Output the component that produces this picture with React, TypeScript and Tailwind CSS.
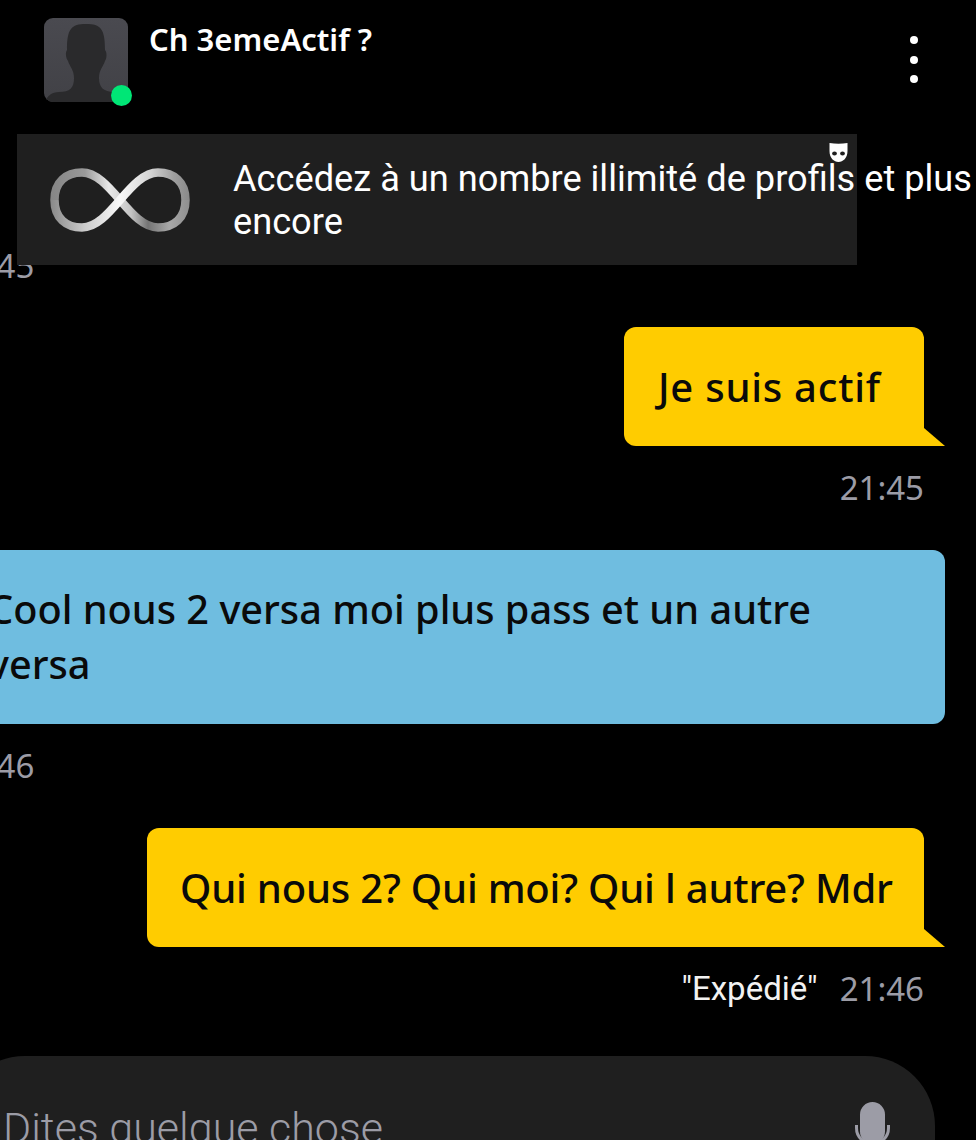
const plex = "font-['Noto_Sans',sans-serif]";
const roboto = "font-['Roboto',sans-serif]";

function Tail({ fill }: { fill: string }) {
  return (
    <svg className="absolute bottom-0 left-full" width="21" height="18" viewBox="0 0 21 18">
      <path d="M0 0 L21 18 L0 18 Z" fill={fill} />
    </svg>
  );
}

function Avatar() {
  return (
    <div className="relative h-[84px] w-[84px] shrink-0">
      <svg className="rounded-[9px]" width="84" height="84" viewBox="0 0 84 84">
        <defs>
          <linearGradient id="av" x1="0" y1="0" x2="0" y2="1">
            <stop offset="0" stopColor="#4a4a50" />
            <stop offset="1" stopColor="#414146" />
          </linearGradient>
        </defs>
        <rect width="84" height="84" fill="url(#av)" />
        <path
          d="M23 32 C23 11 27 6 42 6 C57 6 61 11 61 32 C63 34 63 40 61 43 C59 49 55 52 55 60 C55 70 60 73 68 74 L84 75 L84 84 L1 84 C3 78 8 74 15 74 C26 74 30 70 30 60 C30 52 26 49 24 43 C22 40 21 35 23 32 Z"
          fill="#2a2a2c"
        />
      </svg>
      <span className="absolute left-[67px] top-[67px] h-[21px] w-[21px] rounded-full bg-[#00e676]" />
    </div>
  );
}

function Infinity8() {
  return (
    <svg width="140" height="64" viewBox="0 0 140 64" className="shrink-0">
      <defs>
        <linearGradient id="infa" gradientUnits="userSpaceOnUse" x1="0" y1="0" x2="140" y2="0">
          <stop offset="0" stopColor="#858585" />
          <stop offset="0.25" stopColor="#9a9a9a" />
          <stop offset="0.42" stopColor="#e8e8e8" />
          <stop offset="0.58" stopColor="#c4c4c4" />
          <stop offset="0.7" stopColor="#747474" />
          <stop offset="0.85" stopColor="#a8a8a8" />
          <stop offset="1" stopColor="#8e8e8e" />
        </linearGradient>
        <linearGradient id="infb" gradientUnits="userSpaceOnUse" x1="0" y1="0" x2="140" y2="0">
          <stop offset="0" stopColor="#888888" />
          <stop offset="0.25" stopColor="#cccccc" />
          <stop offset="0.5" stopColor="#f8f8f8" />
          <stop offset="0.72" stopColor="#d4d4d4" />
          <stop offset="0.88" stopColor="#a0a0a0" />
          <stop offset="1" stopColor="#888888" />
        </linearGradient>
      </defs>
      <path
        d="M4.5 32 C4.5 14 16 4.5 32 4.5 C46 4.5 58 18 70 32 C82 46 94 59.5 108 59.5 C124 59.5 135.5 50 135.5 32"
        fill="none"
        stroke="url(#infa)"
        strokeWidth="8.5"
      />
      <path
        d="M4.5 32 C4.5 50 16 59.5 32 59.5 C46 59.5 58 46 70 32 C82 18 94 4.5 108 4.5 C124 4.5 135.5 14 135.5 32"
        fill="none"
        stroke="url(#infb)"
        strokeWidth="8.5"
      />
    </svg>
  );
}

function Mask() {
  return (
    <svg className="absolute left-[812px] top-[9px]" width="19" height="19" viewBox="0 0 19 19">
      <path d="M0.5 0 Q9.5 1.4 18.5 0 L18.5 8 C18.5 15 14 19 9.5 19 C5 19 0.5 15 0.5 8 Z" fill="#ffffff" />
      <ellipse cx="5.5" cy="10.5" rx="2.4" ry="1.9" fill="#1f1f1f" />
      <ellipse cx="13.5" cy="10.5" rx="2.4" ry="1.9" fill="#1f1f1f" />
    </svg>
  );
}

function Mic() {
  return (
    <svg className="absolute left-[900px] top-[46px]" width="35" height="50" viewBox="0 0 35 50" fill="none">
      <rect x="5" y="0" width="25" height="42" rx="12.5" fill="#9c9ca6" />
      <path d="M1.5 23 V26 C1.5 35 8 41 17.5 41 C27 41 33.5 35 33.5 26 V23" stroke="#9c9ca6" strokeWidth="3" />
    </svg>
  );
}

export default function App() {
  return (
    <div className="h-[1140px] w-[976px] overflow-hidden bg-black">
      <div className="flex h-[134px] items-start justify-between pl-[44px] pr-[58px] pt-[18px]">
        <div className="flex items-start gap-[21px]">
          <Avatar />
          <div className={`${plex} text-[31px] font-semibold leading-[42px] text-white`}>Ch 3emeActif ?</div>
        </div>
        <div className="mt-[18px] flex flex-col gap-[11.5px]">
          <span className="h-[8px] w-[8px] rounded-full bg-white" />
          <span className="h-[8px] w-[8px] rounded-full bg-white" />
          <span className="h-[8px] w-[8px] rounded-full bg-white" />
        </div>
      </div>

      <div className="relative z-10 ml-[17px] flex h-[131px] w-[840px] items-center bg-[#1f1f1f] pl-[33px]">
        <Infinity8 />
        <div className={`${roboto} ml-[43px] w-[743px] shrink-0 text-[36.2px] leading-[43px] text-white`}>
          Accédez à un nombre illimité de profils et plus encore
        </div>
        <Mask />
      </div>

      <div className={`${plex} -ml-[50px] -mt-[15px] text-[33px] leading-[32px] text-[#9c9ca6]`}>21:45</div>

      <div className="mt-[45px] flex justify-end pr-[52px]">
        <div className={`${plex} relative flex h-[119px] w-[300px] items-center rounded-[12px] rounded-br-none bg-[#ffcc00] pl-[34px] text-[40px] font-medium tracking-[0.75px] text-[#0a0a0a]`}>
          Je suis actif
          <Tail fill="#ffcc00" />
        </div>
      </div>
      <div className={`${plex} mt-[26px] pr-[52px] text-right text-[33px] leading-[32px] text-[#9c9ca6]`}>21:45</div>

      <div className={`${plex} -ml-[40px] mt-[46px] flex h-[174px] w-[985px] items-center rounded-[12px] bg-[#6fbde0] pl-[28px] text-[39.7px] font-medium leading-[55px] text-[#0a0a0a]`}>
        <div>
          Cool nous 2 versa moi plus pass et un autre
          <br />
          versa
        </div>
      </div>
      <div className={`${plex} -ml-[50px] mt-[26px] text-[33px] leading-[32px] text-[#9c9ca6]`}>21:46</div>

      <div className="mt-[46px] flex justify-end pr-[52px]">
        <div className={`${plex} relative flex h-[119px] w-[777px] items-center rounded-[12px] rounded-br-none bg-[#ffcc00] pl-[33px] text-[40px] font-medium tracking-[-0.2px] text-[#0a0a0a]`}>
          Qui nous 2? Qui moi? Qui l autre? Mdr
          <Tail fill="#ffcc00" />
        </div>
      </div>
      <div className="mt-[26px] flex items-center justify-end gap-[22px] pr-[52px] leading-[32px]">
        <span className={`${roboto} text-[33px] text-[#f2f2f2]`}>"Expédié"</span>
        <span className={`${plex} text-[33px] text-[#9c9ca6]`}>21:46</span>
      </div>

      <div className={`${roboto} relative -ml-[45px] mt-[51px] h-[200px] w-[980px] rounded-[70px] bg-[#1f1f1f] pl-[48px] pt-[48px] text-[43px] font-light leading-[48px] text-[#9c9ca6]`}>
        Dites quelque chose
        <Mic />
      </div>
    </div>
  );
}
